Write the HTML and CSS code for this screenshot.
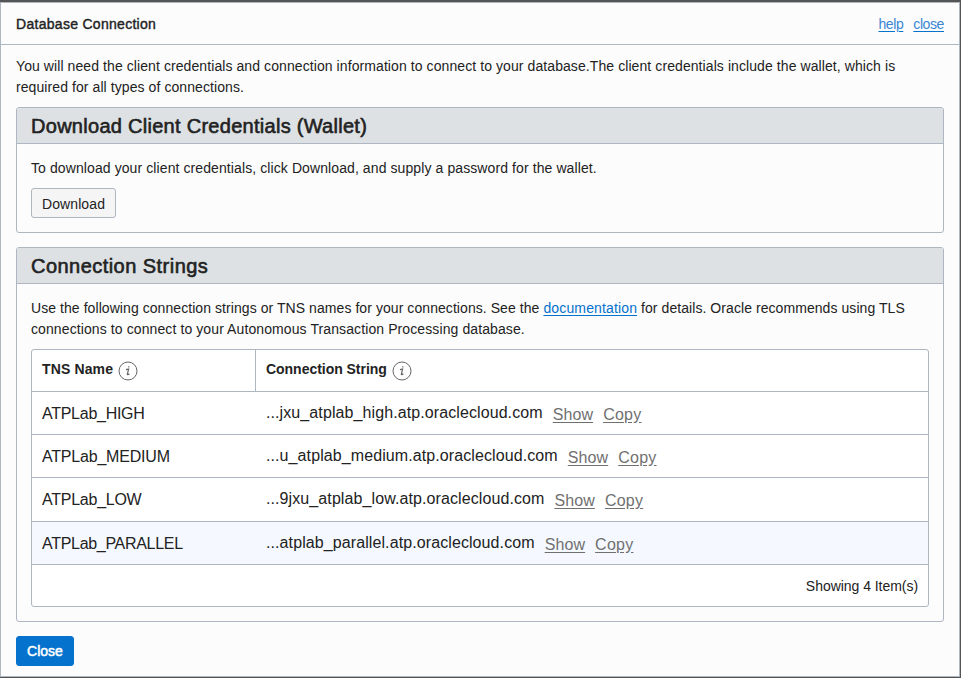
FILE: index.html
```html
<!DOCTYPE html>
<html lang="en">
<head>
<meta charset="utf-8">
<title>Database Connection</title>
<link rel="stylesheet" href="styles.css">
</head>
<body>
<main class="dialog">
  <header class="dialog-header">
    <h1 class="dialog-title"><span class="t-title">Database Connection</span></h1>
    <nav class="dialog-links"><a href="#" class="t-help">help</a><a href="#" class="t-close">close</a></nav>
  </header>
  <div class="dialog-body">
    <p class="text intro"><span class="t-intro1">You will need the client credentials and connection information to connect to your database.The client credentials include the wallet, which is</span><br><span class="t-intro2">required for all types of connections.</span></p>
    <section class="panel wallet">
      <h2 class="panel-title"><span class="t-wallet">Download Client Credentials (Wallet)</span></h2>
      <div class="panel-body">
        <p class="text"><span class="t-download">To download your client credentials, click Download, and supply a password for the wallet.</span></p>
        <button class="btn"><span class="t-btn">Download</span></button>
      </div>
    </section>
    <section class="panel strings">
      <h2 class="panel-title"><span class="t-strings">Connection Strings</span></h2>
      <div class="panel-body">
        <p class="text"><span class="t-use1">Use the following connection strings or TNS names for your connections. See the <a href="#">documentation</a> for details. Oracle recommends using TLS</span><br><span class="t-use2">connections to connect to your Autonomous Transaction Processing database.</span></p>
        <div class="table">
          <div class="row head">
            <div class="cell name"><span class="t-tns">TNS Name</span><svg class="info" viewBox="0 0 20 20"><circle cx="10" cy="10" r="9"/><path d="M8 8.6 10.6 8.1 9.3 13.3Q9.2 14.1 11.4 12.9M10.8 5.3v1.3"/></svg></div>
            <div class="cell value"><span class="t-cs">Connection String</span><svg class="info" viewBox="0 0 20 20"><circle cx="10" cy="10" r="9"/><path d="M8 8.6 10.6 8.1 9.3 13.3Q9.2 14.1 11.4 12.9M10.8 5.3v1.3"/></svg></div>
          </div>
          <div class="row">
            <div class="cell name"><span class="n1">ATPLab_HIGH</span></div>
            <div class="cell value"><span class="conn">...jxu_atplab_high.atp.oraclecloud.com</span><a href="#">Show</a><a href="#" class="copy">Copy</a></div>
          </div>
          <div class="row">
            <div class="cell name"><span class="n2">ATPLab_MEDIUM</span></div>
            <div class="cell value"><span class="conn">...u_atplab_medium.atp.oraclecloud.com</span><a href="#">Show</a><a href="#" class="copy">Copy</a></div>
          </div>
          <div class="row tall">
            <div class="cell name"><span class="n3">ATPLab_LOW</span></div>
            <div class="cell value"><span class="conn">...9jxu_atplab_low.atp.oraclecloud.com</span><a href="#">Show</a><a href="#" class="copy">Copy</a></div>
          </div>
          <div class="row active">
            <div class="cell name"><span class="n4">ATPLab_PARALLEL</span></div>
            <div class="cell value"><span class="conn">...atplab_parallel.atp.oraclecloud.com</span><a href="#">Show</a><a href="#" class="copy">Copy</a></div>
          </div>
          <div class="foot"><span class="t-foot">Showing 4 Item(s)</span></div>
        </div>
      </div>
    </section>
    <button class="btn primary"><span class="t-closebtn">Close</span></button>
  </div>
</main>
</body>
</html>
```
FILE: styles.css
```css
* { box-sizing: border-box; }
body {
  margin: 0;
  height: 678px;
  padding: 2px 1px 1px 0;
  background: #555;
  color: #222;
  font: 14px/21px "Liberation Sans", Arial, sans-serif;
  overflow: hidden;
}
h1, h2, p { margin: 0; }
a { color: #0572ce; text-underline-offset: 2px; }
span { white-space: nowrap; }
.dialog {
  height: 675px;
  background: #fcfcfc;
  border: 1px solid #aeb6bf;
}
.dialog-header {
  height: 42px;
  padding: 2px 15px 0;
  display: flex;
  justify-content: space-between;
  align-items: center;
  border-bottom: 1px solid #aeb8c2;
}
.dialog-title {
  font-size: 14px;
  font-weight: 400;
  -webkit-text-stroke: 0.4px #222;
}
.dialog-links { display: flex; gap: 10px; }
.dialog-links a {
  color: #3a86d4;
  letter-spacing: -0.4px;
  text-decoration-color: #0572ce;
}
.dialog-body { padding: 11px 15px 0; }
.panel {
  border: 1px solid #aeb6c2;
  border-radius: 3px;
  overflow: hidden;
}
.wallet { height: 126px; margin-top: 9px; }
.strings { height: 375px; margin-top: 14px; }
.panel-title {
  height: 36px;
  padding: 0 14px;
  background: #dde1e4;
  border-bottom: 1px solid #aeb6c2;
  font-size: 20px;
  line-height: 36px;
  font-weight: 400;
  -webkit-text-stroke: 0.6px #222;
}
.panel-body { padding: 14px 14px 0; }
.btn {
  display: block;
  width: 85px;
  height: 30px;
  margin-top: 9px;
  padding: 2px 0 0;
  border: 1px solid #aeb6c2;
  border-radius: 3px;
  background: #f5f5f5;
  color: #222;
  font: 14px/26px "Liberation Sans", Arial, sans-serif;
}
.primary {
  width: 58px;
  margin-top: 14px;
  padding: 0;
  background: #0572ce;
  border-color: #0572ce;
  color: #fff;
  line-height: 28px;
  -webkit-text-stroke: 0.5px #fff;
}
.table {
  height: 258px;
  margin-top: 9px;
  border: 1px solid #aeb6c2;
  border-radius: 3px;
  background: #fff;
  overflow: hidden;
}
.row {
  display: grid;
  grid-template-columns: 224px 1fr;
  height: 43px;
  border-bottom: 1px solid #aeb6c2;
  font-size: 16px;
}
.row.head { height: 42px; font-size: 14px; font-weight: 700; }
.row.tall { height: 44px; }
.row.active { background: #f5f9ff; }
.cell { padding: 0 10px; display: flex; align-items: center; }
.head .cell { padding-bottom: 2px; }
.head .name { border-right: 1px solid #aeb6c2; }
.info {
  width: 20px;
  height: 20px;
  margin: 3px 0 0 5px;
  fill: none;
  stroke: #666;
  stroke-width: 1;
}
.info path { stroke-width: 1.2; }
.value a { margin: 2px 0 0 10px; color: #707070; letter-spacing: 0.1px; }
.value .copy { letter-spacing: 0.25px; }
.conn { letter-spacing: 0.095px; margin-bottom: 2px; }
.foot {
  height: 41px;
  padding-right: 10px;
  line-height: 43px;
  text-align: right;
}

/* Tracking per text run */
.t-title { letter-spacing: 0.29px; }
.t-intro1 { letter-spacing: 0.084px; }
.t-intro2 { letter-spacing: 0.08px; }
.t-wallet { letter-spacing: 0.28px; }
.t-strings { letter-spacing: 0.46px; }
.t-download { letter-spacing: 0.095px; }
.t-btn { letter-spacing: 0.1px; }
.t-use1 { letter-spacing: 0.066px; }
.t-use1 a { letter-spacing: 0.14px; }
.t-use2 { letter-spacing: 0.1px; }
.t-tns { letter-spacing: 0.13px; }
.t-cs { letter-spacing: -0.03px; }
.n1 { letter-spacing: -0.27px; }
.n2 { letter-spacing: -0.2px; }
.n3 { letter-spacing: -0.25px; }
.n4 { letter-spacing: -0.3px; }
.t-foot { letter-spacing: -0.04px; }
```
